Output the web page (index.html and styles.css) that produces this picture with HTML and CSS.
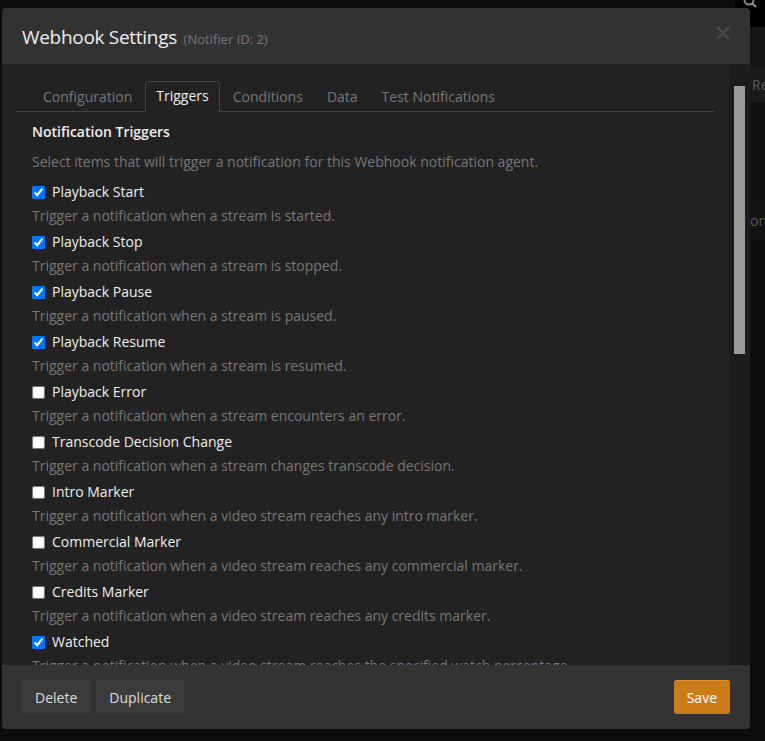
FILE: index.html
```html
<!DOCTYPE html>
<html>
<head>
<meta charset="utf-8">
<link rel="stylesheet" href="styles.css">
</head>
<body>
<div class="page">
  <div class="page-top">
    <svg class="search" width="14" height="14" viewBox="0 0 14 14"><circle cx="6" cy="6" r="4.5" stroke="#8a8a8a" stroke-width="2" fill="none"/><path d="M9.2 9.2 L13 13" stroke="#8a8a8a" stroke-width="2.2"/></svg>
  </div>
  <div class="page-band b1"></div>
  <div class="page-band b2"><span class="page-text">Re</span></div>
  <div class="page-band b3"></div>
  <div class="page-band b4"><span class="page-text edge">on</span></div>
</div>

<div class="modal">
  <div class="modal-header">
    <h4 class="modal-title">Webhook Settings <small>(Notifier ID: 2)</small></h4>
    <span class="close">
      <svg width="14" height="14" viewBox="0 0 14 14"><path d="M1 1 L13 13 M13 1 L1 13" stroke="#4a4a4a" stroke-width="2.4" fill="none"/></svg>
    </span>
  </div>
  <div class="modal-body">
    <div class="body-content">
      <ul class="tabs">
        <li class="tab">Configuration</li>
        <li class="tab active">Triggers</li>
        <li class="tab">Conditions</li>
        <li class="tab">Data</li>
        <li class="tab">Test Notifications</li>
      </ul>
      <div class="pane">
        <div class="section-title">Notification Triggers</div>
        <p class="help intro">Select items that will trigger a notification for this Webhook notification agent.</p>
        <div class="trigger"><label><input type="checkbox" checked> Playback Start</label><p class="help">Trigger a notification when a stream is started.</p></div>
        <div class="trigger"><label><input type="checkbox" checked> Playback Stop</label><p class="help">Trigger a notification when a stream is stopped.</p></div>
        <div class="trigger"><label><input type="checkbox" checked> Playback Pause</label><p class="help">Trigger a notification when a stream is paused.</p></div>
        <div class="trigger"><label><input type="checkbox" checked> Playback Resume</label><p class="help">Trigger a notification when a stream is resumed.</p></div>
        <div class="trigger"><label><input type="checkbox"> Playback Error</label><p class="help">Trigger a notification when a stream encounters an error.</p></div>
        <div class="trigger"><label><input type="checkbox"> Transcode Decision Change</label><p class="help">Trigger a notification when a stream changes transcode decision.</p></div>
        <div class="trigger"><label><input type="checkbox"> Intro Marker</label><p class="help">Trigger a notification when a video stream reaches any intro marker.</p></div>
        <div class="trigger"><label><input type="checkbox"> Commercial Marker</label><p class="help">Trigger a notification when a video stream reaches any commercial marker.</p></div>
        <div class="trigger"><label><input type="checkbox"> Credits Marker</label><p class="help">Trigger a notification when a video stream reaches any credits marker.</p></div>
        <div class="trigger"><label><input type="checkbox" checked> Watched</label><p class="help">Trigger a notification when a video stream reaches the specified watch percentage.</p></div>
      </div>
    </div>
    <div class="scrollbar"><div class="thumb"></div></div>
  </div>
  <div class="modal-footer">
    <div class="left-btns">
      <button class="btn">Delete</button>
      <button class="btn">Duplicate</button>
    </div>
    <button class="btn btn-bright">Save</button>
  </div>
</div>
</body>
</html>
```

FILE: styles.css
```css
html, body {
  margin: 0;
  padding: 0;
  height: 100%;
  background: #0c0c0c;
  font-family: "Open Sans", "DejaVu Sans", sans-serif;
  overflow: hidden;
}

.page {
  display: flex;
  flex-direction: column;
  align-items: flex-end;
  height: 100%;
}
.page-top {
  width: 30px;
  height: 27px;
  position: relative;
  background: #000;
}
.search {
  position: absolute;
  left: 8px;
  top: -6px;
}
.page-band {
  width: 15px;
  background: #121212;
}
.page-band.b1 { height: 40px; background: #151515; }
.page-band.b2 { height: 35px; background: #1b1b1b; display: flex; align-items: center; }
.page-band.b3 { height: 98px; background: #111; }
.page-band.b4 { height: 40px; background: #121212; display: flex; align-items: center; }
.page-text {
  color: #5a5a5a;
  font-size: 14px;
  padding-left: 2px;
}
.page-text.edge {
  padding-left: 0;
}

.modal {
  position: absolute;
  left: 2px;
  top: 8px;
  width: 748px;
  height: 721px;
  display: flex;
  flex-direction: column;
  border-radius: 4px;
  overflow: hidden;
  background: #222;
}

.modal-header {
  height: 56px;
  flex: none;
  background: #323232;
  display: flex;
  align-items: center;
  justify-content: space-between;
  padding: 2px 20px 0 20px;
  box-sizing: border-box;
}
.modal-title {
  margin: 0;
  font-weight: 400;
  font-size: 19px;
  color: #eee;
  letter-spacing: -0.3px;
}
.modal-title small {
  font-size: 13px;
  color: #777;
  margin-left: 2px;
  letter-spacing: 0;
}
.close {
  display: flex;
  margin-top: -8px;
}

.modal-body {
  flex: 1;
  display: flex;
  min-height: 0;
  background: #222;
}
.body-content {
  flex: 1;
  overflow: hidden;
  padding: 17px 15px 0 14px;
}
.scrollbar {
  width: 21px;
  flex: none;
  background: #1c1c1c;
  padding-top: 22px;
  box-sizing: border-box;
}
.thumb {
  margin-left: 5px;
  width: 11px;
  height: 268px;
  background: #999;
}

.tabs {
  list-style: none;
  margin: 0;
  padding: 0 0 0 16px;
  display: flex;
  gap: 2px;
  border-bottom: 1px solid #444;
}
.tab {
  font-size: 14px;
  color: #777;
  padding: 0 10px;
  height: 29px;
  line-height: 27px;
  border: 1px solid transparent;
  border-bottom: none;
  border-radius: 4px 4px 0 0;
  margin-bottom: -1px;
  margin-top: 1px;
}
.tab.active {
  color: #eee;
  background: #222;
  border-color: #444;
  height: 30px;
  margin-top: 0;
  line-height: 28px;
}

.pane {
  padding: 10px 16px 0 16px;
}
.section-title {
  font-size: 14px;
  font-weight: 600;
  color: #eee;
  line-height: 20px;
}
.help {
  margin: 0;
  font-size: 14px;
  color: #777;
  line-height: 20px;
}
.help.intro {
  margin-top: 10px;
  padding-bottom: 4px;
}
.trigger {
  margin-top: 6px;
}
.trigger label {
  display: flex;
  align-items: center;
  font-size: 14px;
  color: #eee;
  line-height: 20px;
}
.trigger label input {
  margin: 0 7px 0 0;
  width: 13px;
  height: 13px;
}
.trigger .help {
  margin-top: 4px;
}

.modal-footer {
  height: 64px;
  flex: none;
  background: #333;
  display: flex;
  align-items: center;
  justify-content: space-between;
  padding: 0 20px;
  box-sizing: border-box;
}
.left-btns {
  display: flex;
  gap: 6px;
}
.btn {
  height: 34px;
  border: none;
  border-radius: 3px;
  background: #3b3b3b;
  color: #ddd;
  font-family: "Open Sans", "DejaVu Sans", sans-serif;
  font-size: 14px;
  padding: 0 13px;
}
.btn-bright {
  background: #cc7b19;
  color: #fff;
  border-top: 1px solid #e0902e;
}
```
